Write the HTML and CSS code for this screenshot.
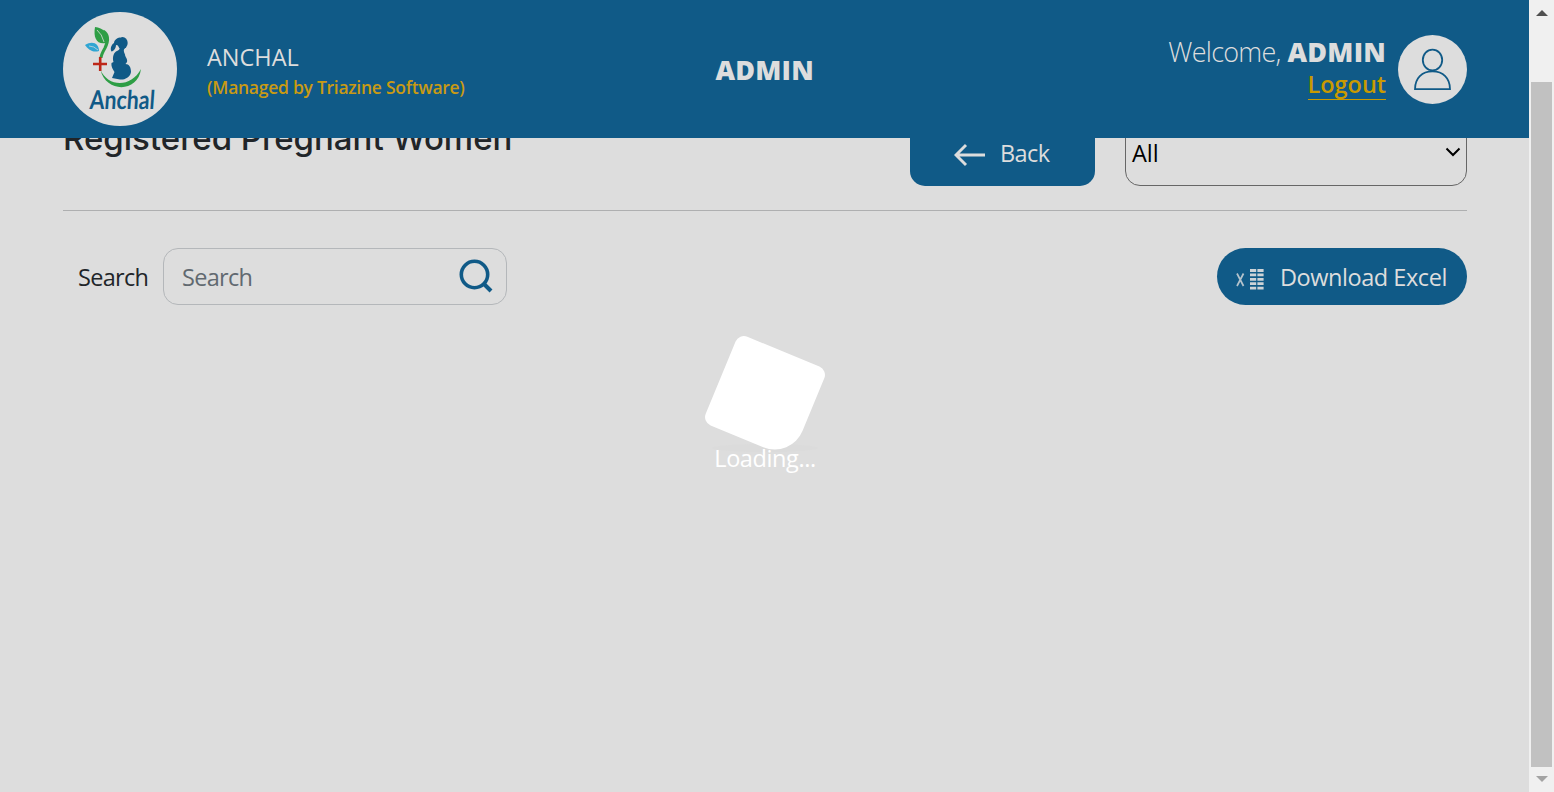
FILE: index.html
```html
<!DOCTYPE html>
<html lang="en">
<head>
<meta charset="utf-8">
<title>Anchal</title>
<link rel="stylesheet" href="styles.css">
</head>
<body>
<div class="window">
  <div class="page">
    <header class="header">
      <svg class="logo" viewBox="0 0 114 114" width="114" height="114">
        <circle cx="57" cy="57" r="57" fill="#ddd"/>
        <path d="M32 15C40 16 46 21 43 31C34 33 30 26 32 15Z" fill="#2e9e45"/>
        <path d="M40 19Q48 24 42 36Q38 43 38 46" fill="none" stroke="#2e9e45" stroke-width="3"/>
        <path d="M34 18Q39 22 41 30" fill="none" stroke="#ddd" stroke-width=".8"/>
        <path d="M22 33C30 28 36 32 36 39C29 41 25 37 22 33Z" fill="#2fa5d3"/>
        <path d="M26 34Q31 34 35 38" fill="none" stroke="#ddd" stroke-width=".7"/>
        <path d="M37.200 45V59M30 52H44" stroke="#bd2718" stroke-width="2.6"/>
        <path d="M37.500 58C45 75 68 76 78 57C75 81 43 81 37.500 58Z" fill="#2e9e45"/>
        <g fill="#105a87">
          <ellipse cx="59.500" cy="31" rx="5.200" ry="6"/>
          <path d="M57 25.500C53 26 51 29 51 31C48 33 47 37 48.500 39.500C51 39 53 36 53 33L58 34Z"/>
          <path d="M56 33L62 36C60 38 61 40 62 42.500C62 45 65 47 64 50L62.500 52C66 52 68 55 68 60C67 66 61 68 57 67.500L49 66L51.500 60C50 57 48 55 48.500 51L50.500 50C49 45 51 40 54 39C57 38 57 36 56 33Z"/>
        </g>
        <text class="logo-text" x="33" y="97" textLength="65" lengthAdjust="spacingAndGlyphs" transform="skewX(-4)">Anchal</text>
      </svg>
      <div class="brand">
        <div class="brand-name">ANCHAL</div>
        <div class="brand-note">(Managed by Triazine Software)</div>
      </div>
      <div class="role">ADMIN</div>
      <div class="account">
        <div class="welcome"><span class="greeting">Welcome,</span> <b class="user">ADMIN</b></div>
        <a class="logout">Logout</a>
      </div>
      <svg class="avatar" viewBox="0 0 69 69" width="69" height="69" fill="none" stroke="#105a87" stroke-width="1.8">
        <circle cx="34.5" cy="34.5" r="34.5" fill="#ddd" stroke="none"/>
        <ellipse cx="34.5" cy="25" rx="9.7" ry="10.4"/>
        <path d="M17 54.200C17 43 24 36.400 34.500 36.400S52 43 52 54.200Z"/>
      </svg>
    </header>
    <main class="main">
      <div class="content">
        <div class="titlebar">
          <h1 class="title">Registered Pregnant Women</h1>
          <div class="back">
            <svg width="31" height="24" viewBox="0 0 31 24" fill="none" stroke="#ddd" stroke-width="2.900"><path d="M31 12H3M12 2L2 12L12 22"/></svg>
            <span class="back-text">Back</span>
          </div>
          <div class="select">
            <span class="select-text">All</span>
            <svg class="chevron" width="16" height="10" viewBox="0 0 16 10" fill="none" stroke="#000" stroke-width="2"><path d="M1.500 1.500L8 8L14.500 1.500"/></svg>
          </div>
        </div>
        <div class="tools">
          <span class="label">Search</span>
          <div class="field">
            <span class="placeholder">Search</span>
            <svg class="magnifier" width="34" height="34" viewBox="0 0 34 34" fill="none" stroke="#105a87" stroke-width="3.600"><circle cx="15.500" cy="15.500" r="13.200"/><path d="M24.500 24.500L32 32" stroke-width="4"/></svg>
          </div>
          <div class="download">
            <svg class="sheet" width="28" height="22" viewBox="0 0 28 22" fill="none" stroke="#ddd">
              <path d="M1 5.500L7.500 18M7.500 5.500L1 18" stroke-width="1.700" opacity=".8"/>
              <path d="M14 2.500H28M14 6.900H28M14 11.300H28M14 15.700H28M14 20.100H28" stroke-width="2.800" stroke-dasharray="6.200 1.200" opacity=".92"/>
            </svg>
            <span class="download-text">Download Excel</span>
          </div>
        </div>
      </div>
    </main>
    <div class="loader">
      <div class="loader-shadow"></div>
      <div class="loader-box"></div>
      <div class="loader-text">Loading...</div>
    </div>
  </div>
  <div class="scrollbar">
    <svg width="12" height="6" viewBox="0 0 12 6"><path d="M0 6L6 0L12 6Z" fill="#505050"/></svg>
    <div class="thumb"></div>
    <svg width="12" height="6" viewBox="0 0 12 6"><path d="M0 0L6 6L12 0Z" fill="#a3a3a3"/></svg>
  </div>
</div>
</body>
</html>
```

FILE: styles.css
```css
* { box-sizing: border-box; }
body { margin: 0; font-family: "Open Sans", "Noto Sans", sans-serif; font-size: 23.5px; color: #212529; background: #ddd; }
svg { display: block; flex: none; }
.window { display: flex; width: 1554px; height: 792px; overflow: hidden; }
.page { position: relative; width: 1529px; display: flex; flex-direction: column; background: #ddd; }
.header { height: 138px; flex: none; padding: 0 62px 0 63px; display: grid; grid-template-columns: 144px 502px 1fr auto 81px; align-items: center; background: #105a87; color: #ddd; white-space: nowrap; }
.logo-text { font: 700 26px Lato, sans-serif; fill: #105a87; }
.brand { padding-top: 4px; }
.brand-name { line-height: 32px; letter-spacing: 0; }
.brand-note { font-size: 17.5px; font-weight: 600; line-height: 28px; color: #c99a13; letter-spacing: -.27px; }
.role { padding-left: 6.5px; font-size: 27px; font-weight: 800; letter-spacing: .2px; }
.account { display: flex; flex-direction: column; align-items: flex-end; margin-top: -2px; }
.welcome { font-size: 27px; line-height: 31px; }
.greeting { font-weight: 300; letter-spacing: -.75px; }
.user { font-weight: 800; letter-spacing: .2px; }
.logout { font-size: 23.500px; font-weight: 600; line-height: 29px; padding-top: 3px; color: #c99a00; letter-spacing: -.05px; border-bottom: 1px solid #c99a00; }
.avatar { justify-self: end; }
.main { flex: 1; overflow: hidden; }
.content { margin-top: -22px; padding: 0 62px 0 63px; }
.titlebar { display: flex; align-items: flex-end; height: 95px; padding-bottom: 24px; border-bottom: 1px solid #aeafb0; }
.title { flex: 1; margin: 0 0 27px; font: 500 33px/42px Inter, sans-serif; white-space: nowrap; }
.back { display: flex; align-items: center; gap: 15px; width: 185px; height: 63px; padding: 0 0 0 44px; border-radius: 15px; background: #105a87; color: #ddd; }
.back-text, .select-text { padding-bottom: 3px; }
.select { display: flex; align-items: center; justify-content: space-between; width: 342px; height: 63px; margin-left: 30px; padding: 0 5px 0 6px; border: 1px solid #666; border-radius: 15px; color: #000; }
.chevron { margin-bottom: 6px; }
.tools { display: flex; align-items: center; height: 57px; margin-top: 37px; padding-left: 15px; }
.label { width: 85px; }
.field { display: flex; align-items: center; justify-content: space-between; width: 344px; height: 57px; padding: 0 13px 0 18px; border: 1px solid #b4b7ba; border-radius: 15px; color: #616970; }
.magnifier { margin-bottom: 2px; }
.download { display: flex; align-items: center; gap: 16px; width: 250px; height: 57px; margin-left: auto; padding-left: 19px; border-radius: 29px; background: #105a87; color: #ddd; white-space: nowrap; }
.sheet { margin-top: 4px; }
.label, .placeholder { letter-spacing: -.7px; }
.back-text { letter-spacing: -.6px; }
.download-text { letter-spacing: -.45px; }
.loader { position: absolute; left: 665px; top: 348px; width: 200px; display: flex; flex-direction: column; align-items: center; color: #fff; }
.loader-box { width: 96px; height: 96px; border-radius: 9px 9px 30px 9px; background: #fff; transform: rotate(22.5deg); }
.loader-shadow { position: absolute; top: 96px; width: 106px; height: 8px; border-radius: 50%; background: #dbdbdb; }
.loader-text { position: relative; margin-top: -2px; line-height: 32px; letter-spacing: -.4px; }
.scrollbar { display: flex; flex-direction: column; align-items: center; width: 25px; padding: 10px 0 10px; background: #f0f0f0; }
.thumb { width: 21px; height: 685px; margin: 66px 0 9px; background: #c1c1c1; }
```
